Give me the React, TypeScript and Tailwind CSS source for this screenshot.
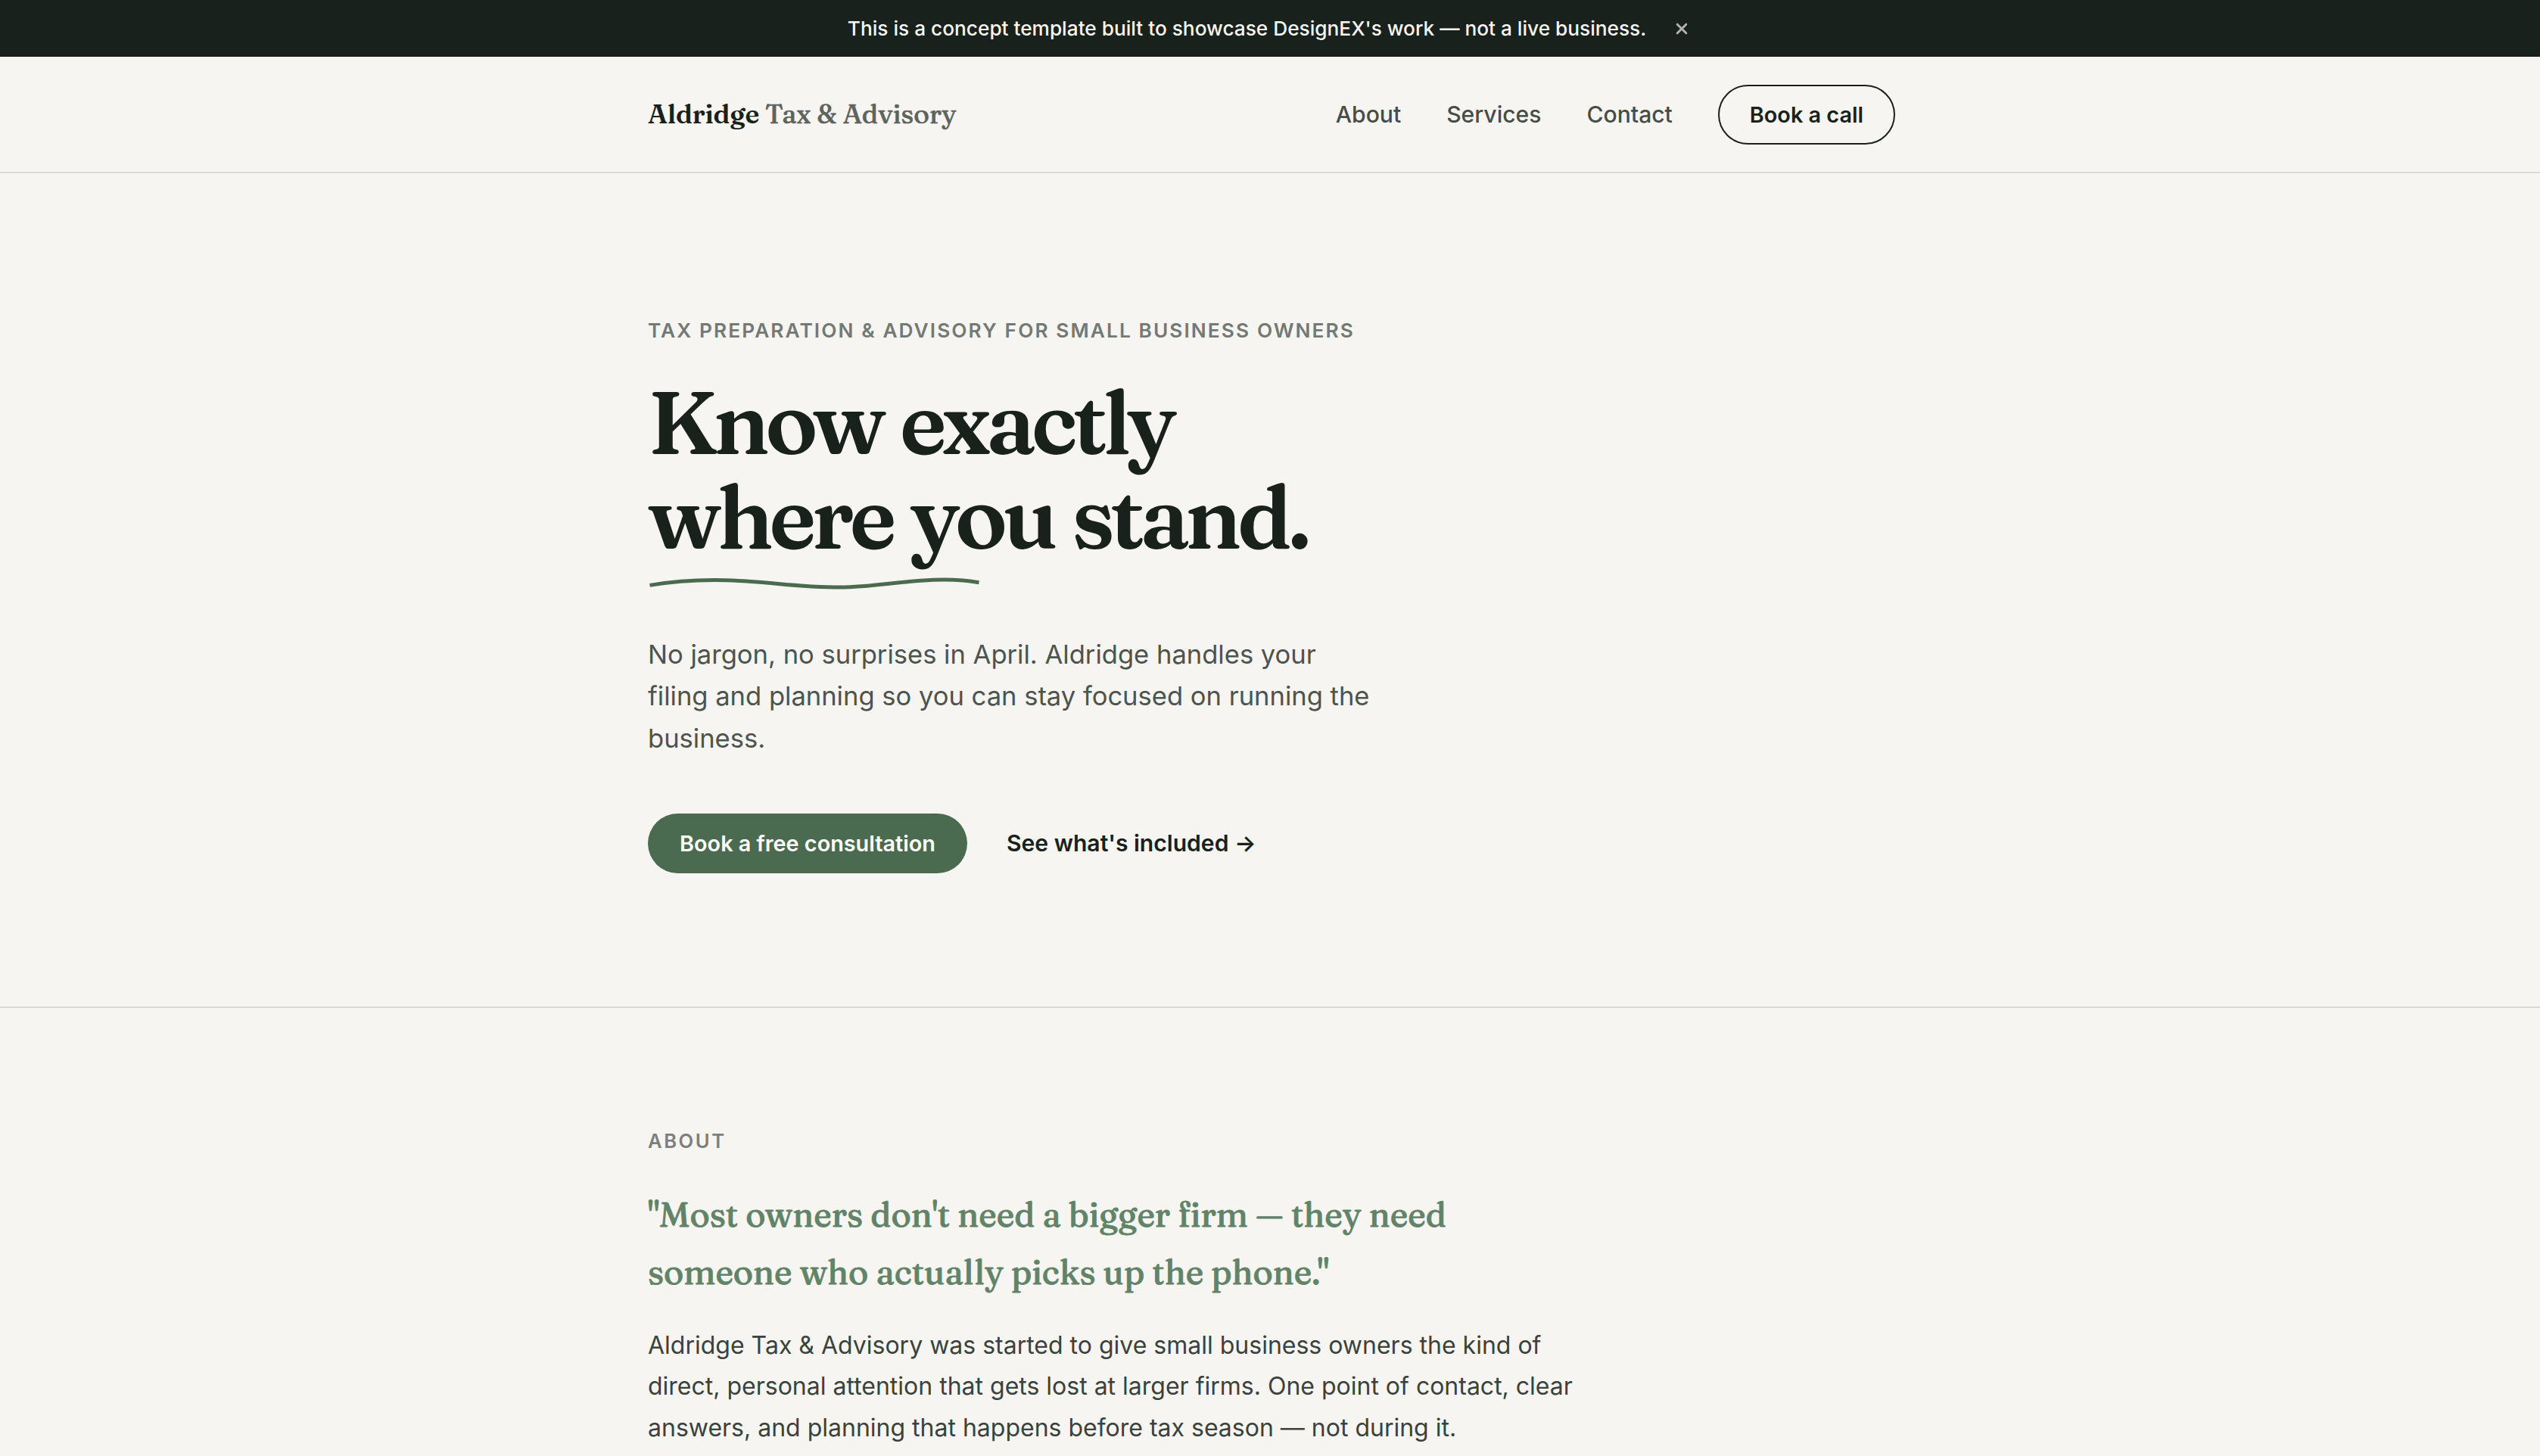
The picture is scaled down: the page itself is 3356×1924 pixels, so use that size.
const serif = "font-['Fraunces','Liberation_Serif',serif]";

const navLinks = ["About", "Services", "Contact"];

function Banner() {
  return (
    <div className="flex h-[75px] items-center justify-center gap-8 bg-[#18211c] text-[#f7f5f1]">
      <p className="text-[26.24px] font-medium">
        This is a concept template built to showcase DesignEX's work — not a live business.
      </p>
      <button aria-label="Dismiss" className="flex w-[29px] justify-center text-[#b1b3af]">
        <svg width="16" height="16" viewBox="0 0 16 16" fill="none" stroke="currentColor" strokeWidth="3" strokeLinecap="round">
          <path d="M2.2 2.2 13.8 13.8M13.8 2.2 2.2 13.8" />
        </svg>
      </button>
    </div>
  );
}

function Header() {
  return (
    <header className="flex h-[154px] items-center justify-between border-b-2 border-[#d9d8d3] pt-px pr-[852px] pl-[856px]">
      <div className={`${serif} text-[35.2px]`}>
        <span className="font-semibold tracking-[-0.2px]">Aldridge</span>{" "}
        <span className="font-medium tracking-[0.1px] text-[#5d645f] [-webkit-text-stroke:0.7px_#5d645f]">Tax &amp; Advisory</span>
      </div>
      <nav className="flex items-center gap-[60px] text-[30.08px] font-medium text-[#464d48]">
        {navLinks.map((label) => (
          <a key={label}>{label}</a>
        ))}
        <a className="flex h-[79px] items-center rounded-full border-2 border-[#18211c] px-10 text-[28.8px] font-semibold text-[#18211c]">
          Book a call
        </a>
      </nav>
    </header>
  );
}

function Hero() {
  return (
    <section className="h-[1103px] border-b-2 border-[#d9d8d3] pt-[187px] pl-[856px]">
      <p className="text-[26.24px] leading-[42px] font-semibold tracking-[0.08em] text-[#737974]">
        TAX PREPARATION &amp; ADVISORY FOR SMALL BUSINESS OWNERS
      </p>
      <h1 className={`${serif} mt-[38px] text-[116px] leading-[125px] font-semibold tracking-[-5.9px] [word-spacing:4px]`}>
        Know exactly
        <br />
        where you stand.
      </h1>
      <svg className="mt-[14px] block" width="440" height="20" viewBox="0 0 440 20" fill="none" stroke="#4a6b50" strokeWidth="5">
        <path d="M2.5 13.4C30 8.5 60 6.4 88 6.4C150 6.4 190 16 254 16C300 16 340 6 392 6C410 6 425 7.6 437.5 9.8" />
      </svg>
      <p className="mt-[57px] text-[34.56px] leading-[55.3px] text-[#4c544f]">
        No jargon, no surprises in April. Aldridge handles your
        <br />
        filing and planning so you can stay focused on running the
        <br />
        business.
      </p>
      <div className="mt-[72px] flex items-center gap-[52px]">
        <a className="flex h-[79px] w-[422px] items-center justify-center rounded-full bg-[#4a6b50] text-[28.8px] font-semibold text-white">
          Book a free consultation
        </a>
        <a className="text-[30.08px] font-semibold">See what's included →</a>
      </div>
    </section>
  );
}

function About() {
  return (
    <section className="pt-[155px] pl-[856px]">
      <p className="text-[25.6px] leading-[41px] font-semibold tracking-[0.1em] text-[#7b807c]">ABOUT</p>
      <blockquote className={`${serif} mt-[39px] text-[44.8px] leading-[76px] font-medium text-[#618468] [-webkit-text-stroke:0.9px_#618468]`}>
        "Most owners don't need a bigger firm — they need
        <br />
        someone who actually picks up the phone."
      </blockquote>
      <p className="mt-[32px] text-[32px] leading-[54.4px] text-[#3a423d]">
        Aldridge Tax &amp; Advisory was started to give small business owners the kind of
        <br />
        direct, personal attention that gets lost at larger firms. One point of contact, clear
        <br />
        answers, and planning that happens before tax season — not during it.
      </p>
    </section>
  );
}

export default function App() {
  return (
    <div className="h-[1924px] overflow-hidden bg-[#f7f5f1] font-['Inter',sans-serif] text-[#18211c]">
      <Banner />
      <Header />
      <Hero />
      <About />
    </div>
  );
}
